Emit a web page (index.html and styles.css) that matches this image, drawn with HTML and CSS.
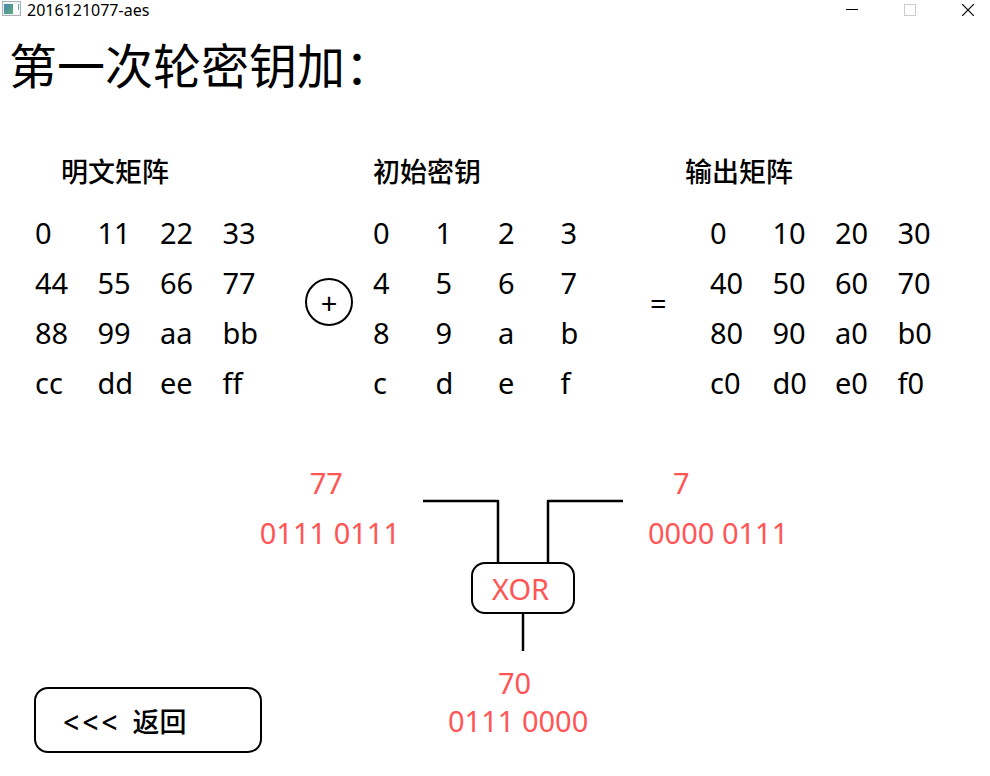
FILE: index.html
```html
<!DOCTYPE html>
<html lang="zh-CN">
<head>
<meta charset="utf-8">
<title>2016121077-aes</title>
<link rel="stylesheet" href="styles.css">
</head>
<body>
<header class="titlebar">
  <svg class="app-icon" width="19" height="16" viewBox="0 0 19 16" aria-hidden="true">
    <defs>
      <linearGradient id="screen" x1="0" y1="0" x2="1" y2="1">
        <stop offset="0" stop-color="#4a86b4"/>
        <stop offset="1" stop-color="#5fae78"/>
      </linearGradient>
    </defs>
    <rect x="0.5" y="1.5" width="18" height="14" fill="#f1f4f5" stroke="#a9b1b7"/>
    <rect x="2" y="4" width="9" height="10" fill="url(#screen)"/>
    <rect x="12" y="4" width="5" height="10" fill="#fdfdfd"/>
    <rect x="16" y="4" width="1" height="6" fill="#6fae9a"/>
  </svg>
  <span class="app-name">2016121077-aes</span>
  <div class="window-buttons">
    <button type="button" aria-label="最小化"><svg width="12" height="12" viewBox="0 0 12 12"><path d="M0 5.5H12" stroke="#000"/></svg></button>
    <button type="button" aria-label="最大化" disabled><svg width="12" height="12" viewBox="0 0 12 12"><rect x="0.5" y="0.5" width="11" height="11" fill="none" stroke="#ccc"/></svg></button>
    <button type="button" aria-label="关闭"><svg width="12" height="12" viewBox="0 0 12 12"><path d="M0 0L12 12M12 0L0 12" stroke="#000" stroke-width="1.2"/></svg></button>
  </div>
</header>
<main>
  <h1>第一次轮密钥加：</h1>
  <div class="captions">
    <h2 id="plain">明文矩阵</h2>
    <h2 id="key">初始密钥</h2>
    <h2 id="output">输出矩阵</h2>
  </div>
  <section class="equation">
    <table aria-labelledby="plain">
      <tr><td>0</td><td>11</td><td>22</td><td>33</td></tr>
      <tr><td>44</td><td>55</td><td>66</td><td>77</td></tr>
      <tr><td>88</td><td>99</td><td>aa</td><td>bb</td></tr>
      <tr><td>cc</td><td>dd</td><td>ee</td><td>ff</td></tr>
    </table>
    <span class="operator plus">+</span>
    <table aria-labelledby="key">
      <tr><td>0</td><td>1</td><td>2</td><td>3</td></tr>
      <tr><td>4</td><td>5</td><td>6</td><td>7</td></tr>
      <tr><td>8</td><td>9</td><td>a</td><td>b</td></tr>
      <tr><td>c</td><td>d</td><td>e</td><td>f</td></tr>
    </table>
    <span class="operator equals">=</span>
    <table aria-labelledby="output">
      <tr><td>0</td><td>10</td><td>20</td><td>30</td></tr>
      <tr><td>40</td><td>50</td><td>60</td><td>70</td></tr>
      <tr><td>80</td><td>90</td><td>a0</td><td>b0</td></tr>
      <tr><td>c0</td><td>d0</td><td>e0</td><td>f0</td></tr>
    </table>
  </section>
  <section class="diagram">
    <div class="operand left">
      <span class="hex wide">77</span>
      <span>0111 0111</span>
    </div>
    <div class="gate">
      <svg width="200" height="63" viewBox="0 0 200 63" aria-hidden="true"><path d="M0 2H75V63M200 2H125V63" fill="none" stroke="#000" stroke-width="2.5" stroke-linejoin="round"/></svg>
      <span class="gate-box">XOR</span>
      <svg width="200" height="37" viewBox="0 0 200 37" aria-hidden="true"><path d="M100 0V37" stroke="#000" stroke-width="2.5"/></svg>
    </div>
    <div class="operand right">
      <span class="hex">7</span>
      <span>0000 0111</span>
    </div>
    <button class="back" type="button"><span class="arrows">&lt;&lt;&lt;</span><span>返回</span></button>
    <div class="result">
      <span class="hex wide">70</span>
      <span>0111 0000</span>
    </div>
  </section>
</main>
</body>
</html>
```
FILE: styles.css
```css
* {
  box-sizing: border-box;
}

body {
  margin: 0;
  background: #fff;
  color: #000;
  font-family: "Noto Sans", "Noto Sans CJK SC", sans-serif;
  font-size: 29px;
}

button {
  margin: 0;
  padding: 0;
  border: 0;
  background: none;
  color: inherit;
  font: inherit;
}

.titlebar {
  display: flex;
  align-items: center;
  gap: 6px;
  height: 20px;
  padding-left: 2px;
}

.app-icon {
  align-self: flex-start;
}

.app-name {
  flex: 1;
  font-size: 16px;
  line-height: 20px;
}

.window-buttons {
  display: flex;
  gap: 46px;
  padding-right: 16px;
}

.window-buttons button {
  display: flex;
}

h1,
h2 {
  margin: 0;
  font-family: "Noto Sans CJK SC", sans-serif;
}

h1 {
  padding: 8px 9px 0;
  font-size: 48px;
  font-weight: 400;
  line-height: 70px;
}

.captions {
  display: grid;
  grid-template-columns: 312fr 312fr 305fr;
  padding: 53px 0 0 61px;
}

h2 {
  font-size: 27px;
  font-weight: 500;
  line-height: 40px;
}

.equation {
  display: grid;
  grid-template-columns: 250fr 88fr 250fr 87fr 250fr;
  align-items: start;
  padding: 17px 30px 0 35px;
}

table {
  width: 100%;
  border-collapse: collapse;
  table-layout: fixed;
}

td {
  height: 50px;
  padding: 0;
  line-height: 40px;
}

.operator {
  margin-top: 70px;
}

.plus {
  display: flex;
  justify-content: center;
  justify-self: center;
  width: 48px;
  height: 48px;
  border: 2px solid #000;
  border-radius: 50%;
  line-height: 46px;
}

.equals {
  padding-left: 27px;
  line-height: 50px;
}

.diagram {
  display: grid;
  grid-template-columns: 423fr 200px 367fr;
  padding-top: 50px;
  color: #ff5555;
}

.operand,
.result {
  display: flex;
  flex-direction: column;
}

.operand {
  line-height: 50px;
}

.left {
  justify-self: end;
  padding-right: 23px;
}

.right {
  padding-left: 25px;
}

.hex {
  padding-left: 25px;
}

.wide {
  padding-left: 50px;
}

.gate {
  display: flex;
  flex-direction: column;
  align-items: center;
  padding-top: 41px;
}

.gate svg {
  display: block;
}

.gate-box {
  width: 104px;
  height: 52px;
  padding-left: 19px;
  border: 2px solid #000;
  border-radius: 14px;
  line-height: 49px;
}

.result {
  grid-column: 2;
  padding: 13px 0 0 25px;
  line-height: 38px;
}

.back {
  display: flex;
  align-items: center;
  gap: 13px;
  width: 228px;
  height: 66px;
  margin: 36px 0 0 34px;
  padding-left: 26px;
  border: 2px solid #000;
  border-radius: 14px;
  color: #000;
  font-size: 27px;
  font-weight: 500;
}

.arrows {
  font-family: Inter, sans-serif;
  font-size: 29px;
  font-weight: 400;
}
```
